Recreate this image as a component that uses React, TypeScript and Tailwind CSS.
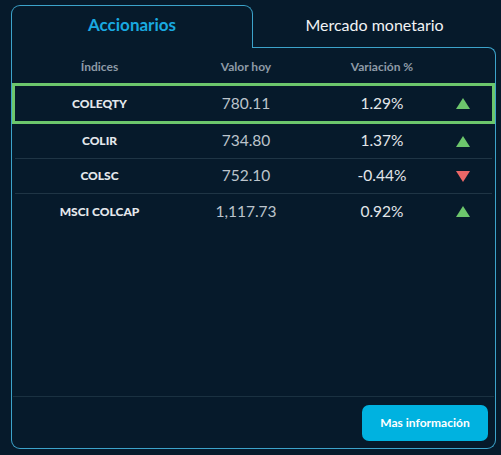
const rows = [
	{ name: 'COLEQTY', value: '780.11', change: '1.29%', up: true, active: true },
	{ name: 'COLIR', value: '734.80', change: '1.37%', up: true },
	{ name: 'COLSC', value: '752.10', change: '-0.44%', up: false },
	{ name: 'MSCI COLCAP', value: '1,117.73', change: '0.92%', up: true },
]

const heights = ['h-[41px]', 'h-[34px]', 'h-[34px]', 'h-[35px]']

const Arrow = ({ up }: { up: boolean }) => (
	<svg width="14" height="11" viewBox="0 0 14 11">
		{up ? (
			<polygon points="7,0 14,11 0,11" fill="#6cc66c" />
		) : (
			<polygon points="0,0 14,0 7,11" fill="#ea6767" />
		)}
	</svg>
)

const cols = 'grid grid-cols-[169px_124px_148px_14px_1fr] items-center h-full'

export default function App() {
	return (
		<div
			className="h-[455px] w-[501px] bg-[#061a2b] pb-[6px] pl-[11px] pr-[5px] pt-[5px]"
			style={{ fontFamily: 'Lato, "Noto Sans", sans-serif' }}
		>
			<div className="flex h-full flex-col">
				{/* tabs */}
				<div className="flex h-[42px]">
					<div className="flex w-[242px] items-center justify-center rounded-t-[9px] border border-b-0 border-[#3ca3ca] pb-[3px] text-[17px] font-bold text-[#19a9e0]">
						Accionarios
					</div>
					<div className="flex flex-1 items-center justify-center pb-[3px] text-[16px] text-[#f1f3f5]">
						Mercado monetario
					</div>
				</div>

				{/* panel top edge */}
				<div className="flex h-[8px]">
					<div className="w-[241px] border-l border-[#3ca3ca]" />
					<div className="flex-1 rounded-tr-[9px] border-r border-t border-[#3ca3ca]" />
				</div>

				<div className="flex flex-1 flex-col rounded-b-[9px] border border-t-0 border-[#3ca3ca]">
					<div className="h-[28px] px-[3px] text-[12px] font-bold text-[#8e9ba7]">
						<div className={`${cols} pb-[4px]`}>
							<div className="text-center">Índices</div>
							<div className="text-center">Valor hoy</div>
							<div className="text-center">Variación %</div>
						</div>
					</div>

					{rows.map((r, i) => (
						<div key={r.name}>
							{i > 1 && <div className="mx-[3px] h-px bg-[#1f3545]" />}
							<div
								className={`${heights[i]} border-[3px] ${
									r.active ? 'border-[#6cc66c]' : 'border-transparent'
								}`}
							>
								<div className={cols}>
									<div className="text-center text-[12px] font-black text-[#e4e8ec]">{r.name}</div>
									<div className="text-center text-[15.5px] text-[#bcc4cc]">{r.value}</div>
									<div className="text-center text-[15.5px] text-[#e2e6ea]">{r.change}</div>
									<div className="flex justify-center">
										<Arrow up={r.up} />
									</div>
								</div>
							</div>
						</div>
					))}

					<div className="flex-1" />
					<div className="mx-px h-px bg-[#1a3141]" />
					<div className="flex justify-end pb-[7px] pr-[7px] pt-[8px]">
						<button className="h-[36px] w-[126px] rounded-[7px] bg-[#00b2e0] text-[12px] font-bold text-white">
							Mas información
						</button>
					</div>
				</div>
			</div>
		</div>
	)
}
